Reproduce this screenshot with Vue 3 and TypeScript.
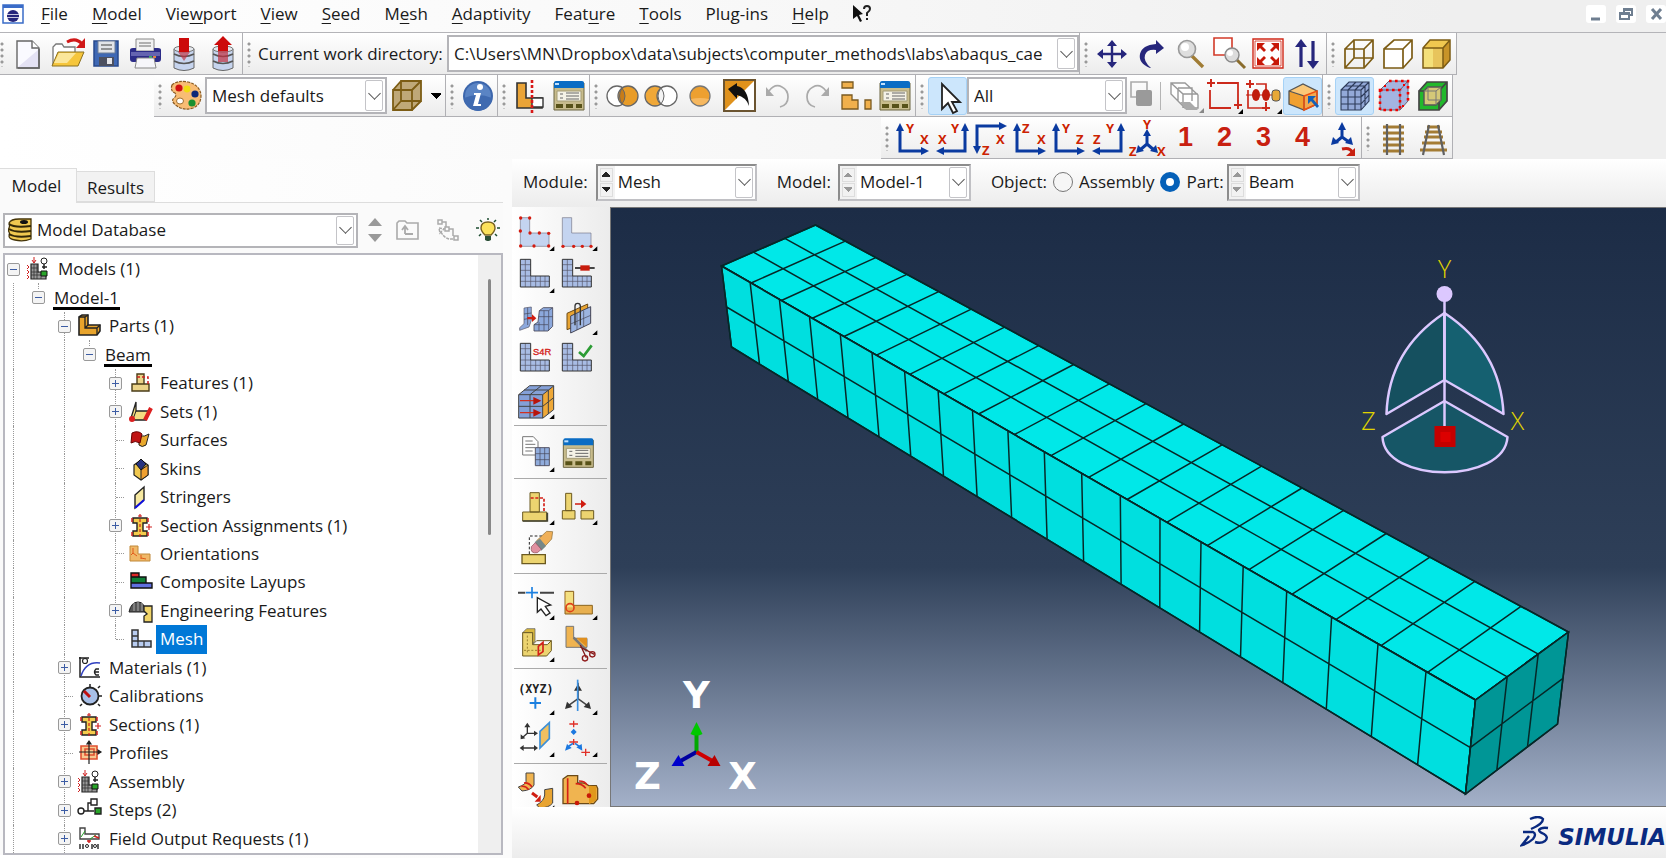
<script setup lang="ts">
import { computed, ref } from 'vue'

type Point = [number, number]

interface TreeNode {
  label: string
  level: number
  icon?: string
  toggle?: '+' | '-'
  underline?: boolean
  selected?: boolean
}

interface MenuItem {
  before: string
  key: string
  after: string
}

const menu: MenuItem[] = [
  { before: '', key: 'F', after: 'ile' },
  { before: '', key: 'M', after: 'odel' },
  { before: 'Vie', key: 'w', after: 'port' },
  { before: '', key: 'V', after: 'iew' },
  { before: '', key: 'S', after: 'eed' },
  { before: 'M', key: 'e', after: 'sh' },
  { before: '', key: 'A', after: 'daptivity' },
  { before: 'Feat', key: 'u', after: 're' },
  { before: '', key: 'T', after: 'ools' },
  { before: 'Plu', key: 'g', after: '-ins' },
  { before: '', key: 'H', after: 'elp' },
]

const axis = (x: number, y: number, t: string) =>
  `<text x="${x}" y="${y}" font-family="Open Sans, sans-serif" font-weight="700" font-size="13" fill="#cc2200">${t}</text>`
const arrows = (d: string, heads: string) =>
  `<path d="${d}" fill="none" stroke="#0a3aa0" stroke-width="3"/><path d="${heads}" fill="#0a3aa0"/>`

const tableIcon = `<path d="M3 5h30v27H3z" fill="#c8bc8c" stroke="#6b6440"/><path d="M3 5q0-2 2-2h26q2 0 2 2v5H3z" fill="#0a6cc4"/><path d="M4 6h4" stroke="#bfe0ff" stroke-width="2"/><path d="M6 13h24v10H6z" fill="#f4f2e6" stroke="#a49c74"/><path d="M9 16h3M9 20h3M15 15h13M15 18h13M15 21h13" stroke="#666"/><path d="M5 26h7v4H5zM15 26h7v4h-7zM25 26h6v4h-6z" fill="#585218"/>`
const cylinder = `<path d="M8 13v19q10 5 20 0V13" fill="#c6d4ee" stroke="#666"/><path d="M8 18q10 5 20 0M8 25q10 5 20 0" fill="none" stroke="#555" stroke-width="1.5"/><ellipse cx="18" cy="13" rx="10" ry="3" fill="#e4e8ee" stroke="#777"/>`

/* Horizontal toolbars: 36 x 36 drawing area */
const bar: Record<string, string> = {
  fresh: `<path d="M7 5h15l7 7v20H7z" fill="#fafaff" stroke="#666" stroke-width="1.4"/><path d="M8 31L28 14v17z" fill="#e4e2f4"/><path d="M22 5v7h7" fill="#fff" stroke="#666" stroke-width="1.4"/><path d="M29 13v19H8" fill="none" stroke="#666" stroke-width="1.6"/>`,
  open: `<path d="M4 29V11l3-3h6l2 3h11v7" fill="#fff" stroke="#777" stroke-width="1.3"/><path d="M9 16h26l-6 14H3z" fill="#f6c63c" stroke="#8a7020"/><path d="M10 17h17l-9 10H5z" fill="#fbe69a"/><path d="M18 6q9-5 15 2" fill="none" stroke="#d01818" stroke-width="3"/><path d="M36 2v10H27z" fill="#d01818"/>`,
  save: `<path d="M6 5h24v25H6z" fill="#3f68b4" stroke="#27488c" stroke-width="1.5"/><path d="M10 5h17v12H10z" fill="#e2e4e8" stroke="#6f7f98"/><path d="M13 9h11M13 13h11" stroke="#777" stroke-width="1.5"/><path d="M11 21h15v9H11z" fill="#4c5060"/><path d="M19 22h5v6h-5z" fill="#e6e6ea"/>`,
  print: `<path d="M9 3h18v12H9z" fill="#f2f2f2" stroke="#888"/><path d="M12 7h12M12 10h12" stroke="#999" stroke-width="1.5"/><path d="M3 14q0-2 3-2h3v3h18v-3h4q3 0 3 2v9q0 3-3 3H6q-3 0-3-3z" fill="#2c2c88"/><path d="M4 16h29v4H4z" fill="#6464b0"/><path d="M22 20h3v2h-3z" fill="#30b060"/><path d="M26 20h3v2h-3z" fill="#e08040"/><path d="M10 22h17l2 10H8z" fill="#f6f6fa" stroke="#888"/>`,
  load: cylinder + `<path d="M13 2h10v14H13z" fill="#cc0a0a"/><path d="M12 16h12l-6 9z" fill="#c03040" opacity=".65"/>`,
  unload: cylinder + `<path d="M13 14h10v12H13z" fill="#c03040" opacity=".7"/><path d="M18 0l9 9h-4v6H13V9H9z" fill="#cc0a0a"/>`,
  pan: `<path d="M18 8v21M8 18h21" stroke="#26267c" stroke-width="2.4"/><path d="M18 4l5 6H13zM18 32l5-6H13zM3 18l6-5v10zM33 18l-6-5v10z" fill="#26267c"/>`,
  turn: `<path d="M17 32Q5 27 7 18T23 8V4l8 8-8 6v-4q-9-1-11 5t6 13z" fill="#26267c"/>`,
  loupe: `<path d="M19 19l12 12" stroke="#a07c34" stroke-width="3.4"/><circle cx="15" cy="13" r="8.500" fill="#dedede" stroke="#999" stroke-width="1.6"/><circle cx="13" cy="11" r="4" fill="#fff"/>`,
  boxzoom: `<path d="M3 2h18v17H3z" fill="#fff" stroke="#d23a28" stroke-width="1.6"/><path d="M25 23l9 9" stroke="#8a6c2c" stroke-width="3"/><circle cx="21" cy="19" r="7" fill="#dcdcdc" stroke="#888" stroke-width="1.4"/><circle cx="19" cy="17" r="3" fill="#fff"/>`,
  fit: `<path d="M3 3h30v29H3z" fill="#fff" stroke="#d02818" stroke-width="1.4"/><path d="M5 5h26v25H5z" fill="none" stroke="#d02818" stroke-width=".8"/><path d="M7 7h8l-3 3 4 4-2 2-4-4-3 3zM29 7h-8l3 3-4 4 2 2 4-4 3 3zM7 29h8l-3-3 4-4-2-2-4 4-3-3zM29 29h-8l3-3-4-4 2-2 4 4 3-3z" fill="#c81808"/>`,
  cycle: `<path d="M12 31V9M24 5v22" stroke="#26267c" stroke-width="3.2"/><path d="M12 3l6 8H6zM24 33l6-8H18z" fill="#26267c"/>`,
  wire: `<path d="M4 13h19v19H4zM13 4h19v18H13zM4 13l9-9M23 13l9-9M4 32l9-10M23 32l9-10" fill="none" stroke="#7c5c14" stroke-width="1.7"/>`,
  hidden: `<path d="M4 13h19v19H4zM4 13l10-9h18v18l-9 10M23 13l9-9" fill="#fff" stroke="#7c5c14" stroke-width="1.7"/>`,
  shaded: `<path d="M4 12l7-8h20l-7 8z" fill="#f0c850"/><path d="M4 12h20v20H4z" fill="#f4e07a"/><path d="M14 12h10v20H14z" fill="#e8c45c"/><path d="M24 12l7-8v20l-7 8z" fill="#c89428"/><path d="M4 12l7-8h20v20l-7 8H4zM4 12h20v20M24 12l7-8" fill="none" stroke="#7c5c14" stroke-width="1.5"/>`,
  palette: `<path d="M4 7q5-5 16-3 12 3 13 13 0 10-8 13-9 3-16-2-7-5-3-8 3-2 1-5-5-2-3-8z" fill="#f8bc74" stroke="#8a5a20" stroke-width="1.2" stroke-dasharray="3 1"/><circle cx="11" cy="10" r="3.600" fill="#d01010"/><circle cx="19" cy="11" r="3.400" fill="#f0dc10"/><circle cx="27" cy="16" r="3.600" fill="#102878"/><circle cx="24" cy="25" r="3.600" fill="#189030"/><ellipse cx="12" cy="23" rx="3.500" ry="3" fill="#fff" stroke="#a07030"/>`,
  cube: `<path d="M4 12l8-9h20v20l-9 9H4z" fill="#bfa878"/><path d="M4 12h19v20H4zM12 3h20v20H12zM4 12l8-9M23 12l9-9M4 32l8-9M23 32l9-9" fill="none" stroke="#7c5c14" stroke-width="1.8"/>`,
  info: `<circle cx="18" cy="18" r="15" fill="#3c66ac"/><circle cx="18" cy="18" r="13" fill="#5a84c4"/><path d="M4 20q14-6 28 0-2 12-14 13Q6 32 4 20z" fill="#3f6ab0"/><circle cx="20" cy="9" r="3" fill="#fff"/><path d="M14 15h7l-3 11h3v2h-8l3-11h-2z" fill="#fff"/>`,
  section: `<path d="M5 5h9v15h16v10H5z" fill="#eaa437" stroke="#333" stroke-width="1.6"/><path d="M20 20h11v9H20z" fill="#fff" stroke="#333" stroke-width="1.4"/><path d="M20 2v34" stroke="#d81818" stroke-width="2.600" stroke-dasharray="3 2"/>`,
  table: tableIcon,
  venn1: `<circle cx="13" cy="18" r="10" fill="#fff" stroke="#666" stroke-width="1.3"/><circle cx="24" cy="18" r="10" fill="#e89c28" stroke="#666" stroke-width="1.3"/><path d="M18 10q6 8 0 16-5-8 0-16z" fill="#c87c18" stroke="#666"/>`,
  venn2: `<circle cx="12" cy="18" r="10" fill="#f0a838" stroke="#666" stroke-width="1.3"/><circle cx="24" cy="18" r="10" fill="#fff" stroke="#666" stroke-width="1.3"/><path d="M18 10q6 8 0 16-6-8 0-16z" fill="#f4f4f4" stroke="#666"/>`,
  disc: `<circle cx="18" cy="18" r="10" fill="#eda030" stroke="#777" stroke-width="1.3"/><path d="M9 21q9-2 18 0-3 6-9 6t-9-6z" fill="#f6b860"/>`,
  swap: `<path d="M3 2h31v31H3z" fill="#fff"/><path d="M3 2h31L3 33z" fill="#e0921c"/><path d="M3 2h31v31H3z" fill="none" stroke="#6b5430" stroke-width="2"/><path d="M7 11l9-6v3q11 2 12 20-3-9-12-11v4z" fill="#111"/>`,
  undo: `<path d="M9 13q6-8 13-4 6 3 6 10 0 8-8 10" fill="none" stroke="#aaa" stroke-width="1.7"/><path d="M6 9v9h8z" fill="#aaa"/>`,
  redo: `<path d="M27 13q-6-8-13-4-6 3-6 10 0 8 8 10" fill="none" stroke="#aaa" stroke-width="1.7"/><path d="M30 9v9h-8z" fill="#aaa"/>`,
  tiles: `<path d="M4 4h11v6H4zM4 17h10v5h6v9H4zM27 22h6v9h-6z" fill="#f0b04c" stroke="#7a5a20" stroke-width="1.3"/>`,
  pointer: `<path d="M12 6v25l6-6 5 10 4-2-5-9h8z" fill="#fff" stroke="#222" stroke-width="1.8"/>`,
  stack: `<path d="M3 4h16v15H3z" fill="none" stroke="#aaa" stroke-width="1.600"/><path d="M8 14q0-2 2-2h12q2 0 2 2v12q0 2-2 2H10q-2 0-2-2z" fill="#9a9a9a"/>`,
  ghost: `<path d="M3 5h14l13 12v13H17L3 16zM3 5l12 11h15M15 16v14M10 10v13M10 10h14v13" fill="#fff" stroke="#999" stroke-width="1.4"/><path d="M12 24l6 8h12l-8-8z" fill="#aaa"/><path d="M36 30v5h-5z" fill="#888"/>`,
  rubber: `<path d="M10 5h21v22M3 12v18h21" fill="none" stroke="#cc2a1c" stroke-width="1.8"/><path d="M4 1v8M0 5h8M31 22v9M27 27h8" stroke="#cc2a1c" stroke-width="2"/><path d="M36 31v5h-5z" fill="#000"/>`,
  picks: `<path d="M10 6h10v8M2 12v18h14M20 24v4" fill="none" stroke="#cc2a1c" stroke-width="1.7"/><path d="M4 2v8M0 6h8M20 24v9M16 30h8" stroke="#cc2a1c" stroke-width="2"/><ellipse cx="10" cy="17" rx="4" ry="6" fill="#c01c0c"/><ellipse cx="20" cy="17" rx="4" ry="6" fill="#c01c0c"/><path d="M0 17h26" stroke="#c01c0c"/><rect x="26" y="12" width="8" height="11" rx="3" fill="#e8a838" stroke="#555"/><path d="M36 31v5h-5z" fill="#000"/>`,
  pickbox: `<path d="M4 13L18 6l14 7-13 5z" fill="#fbc878"/><path d="M4 13l15 5v14L4 26z" fill="#f0a030"/><path d="M19 18l13-5v13l-13 6z" fill="#f2a850"/><path d="M4 13L18 6l14 7v13l-13 6-15-6zM4 13l15 5v14" fill="none" stroke="#555" stroke-width="1.300"/><path d="M19 18l13-5v13l-13 6z" fill="none" stroke="#f05010" stroke-width="1.500"/><path d="M23 18h8l-3 3 6 7-2 2-6-7-3 3z" fill="#1460b8"/>`,
  meshcube: `<path d="M4 12l8-8h20v19l-8 9H4z" fill="#93a9d8"/><path d="M4 12h20v20H4zM4 12l8-8h20v19l-8 9M24 12l8-8M11 12v20M18 12v20M4 19h20M4 26h20M11 12l8-8M18 12l8-8M8 8h20v20M24 19l8-8M24 26l8-9" fill="none" stroke="#2c3a58" stroke-width="1.1"/>`,
  seedcube: `<path d="M4 12l9-9h19v20l-8 9H4z" fill="#a4b4e0"/><path d="M4 12h20v20H4zM4 12l9-9h19v20l-8 9M24 12l8-9" fill="none" stroke="#667" stroke-width="1"/><path d="M4 12h20v20H4zM13 3h19v20" fill="none" stroke="#f00000" stroke-width="2.6" stroke-dasharray="2.6 3.400"/><path d="M8 7h2v2H8zM28 27h-2v2h2zM27 6h2v2h-2z" fill="#f00000"/>`,
  geocube: `<path d="M4 13l8-9h20v19l-8 9H4z" fill="#22b82c"/><path d="M4 13h20v19H4zM4 13l8-9h20v19l-8 9M24 13l8-9" fill="none" stroke="#444" stroke-width="1.7"/><path d="M9 13l4-4h13v13l-5 5H9z" fill="#d4c878" stroke="#555" stroke-width="1.4"/><path d="M9 13h12v14M21 13l5-4M13 9v13h13" fill="none" stroke="#777"/>`,
  xy: arrows('M5 8v23h24', 'M5 3l4 8H1zM34 31l-8-4v8z') + axis(11, 13, 'Y') + axis(25, 24, 'X'),
  yx: arrows('M31 8v23H7', 'M31 3l4 8h-8zM2 31l8-4v8z') + axis(17, 13, 'Y') + axis(4, 24, 'X'),
  zx: arrows('M4 29V6h23', 'M4 34l-4-8h8zM34 6l-8-4v8z') + axis(23, 24, 'X') + axis(9, 35, 'Z'),
  xz: arrows('M5 8v23h24', 'M5 3l4 8H1zM34 31l-8-4v8z') + axis(10, 13, 'Z') + axis(25, 24, 'X'),
  yz: arrows('M5 8v23h24', 'M5 3l4 8H1zM34 31l-8-4v8z') + axis(11, 13, 'Y') + axis(25, 24, 'Z'),
  zy: arrows('M31 8v23H7', 'M31 3l4 8h-8zM2 31l8-4v8z') + axis(16, 13, 'Y') + axis(3, 24, 'Z'),
  iso: arrows('M18 14v10l-7 6M18 24l7 6', 'M18 9l4 7h-8zM7 33l2-8 6 6zM29 33l-2-8-6 6z') + axis(14, 9, 'Y') + axis(0, 36, 'Z') + axis(28, 36, 'X'),
  spin: arrows('M18 8v9l-6 5M18 17l7 5', 'M18 2l4 8h-8zM7 25l2-8 6 6zM29 25l-2-8-6 6z') + `<path d="M18 29q8-2 10 3" fill="none" stroke="#c82010" stroke-width="3"/><path d="M31 28v8h-9z" fill="#c82010"/>`,
  rail1: `<path d="M7 7h21M7 13h21M7 19h21M7 25h21M7 31h21" stroke="#a47c34" stroke-width="3"/><path d="M11 4v31M24 4v31" stroke="#606060" stroke-width="2.200"/>`,
  rail2: `<path d="M12 7h13M10 12h17M9 17h19M7 23h23M5 30h27" stroke="#a47c34" stroke-width="3"/><path d="M14 5L8 35M23 5l6 30" stroke="#606060" stroke-width="2.200"/>`,
}

const corner = '<path d="M106 123h15v-14z" fill="#000"/>'
const seedDots = (pts: Point[]) => pts.map(([x, y]) => `<circle cx="${x}" cy="${y}" r="5" fill="#d41c10"/>`).join('')
const plainL = (x: number) => `<path d="M${x} 23h28v46h58v40H${x}z" fill="#c4d4f0" stroke="#778" stroke-width="2"/>`
const meshL = (x: number) =>
  `<path d="M${x} 22h31v50h56v33H${x}z" fill="#a8bce4"/><path d="M${x + 15} 22v83M${x + 31} 72v33M${x + 46} 72v33M${x + 60} 72v33M${x + 74} 72v33M${x} 38h31M${x} 55h31M${x} 72h31M${x} 88h87" stroke="#556" stroke-width="2"/><path d="M${x} 22h31v50h56v33H${x}z" fill="none" stroke="#333" stroke-width="3"/>`

/* Module toolbox: 126 x 126 drawing area */
const box: Record<string, string> = {
  seedPart: plainL(19) + seedDots([[20, 24], [47, 24], [19, 63], [48, 69], [76, 69], [104, 70], [20, 108], [60, 108], [104, 108]]) + corner,
  seedEdge: plainL(16) + seedDots([[18, 109], [50, 109], [76, 109], [102, 109]]) + corner,
  meshPart: meshL(19) + corner,
  controls: meshL(16) + '<path d="M54 48h59" stroke="#222" stroke-width="5"/><path d="M70 40h28v16H70z" fill="#c81c0c"/>',
  elements: `<path d="M30 42l22-3v40l-7 20-28 10v-8l13-12z" fill="#8ca8dc" stroke="#556" stroke-width="2"/><path d="M41 41v52M30 60l22-3M30 76l22-4" stroke="#445" stroke-width="2"/><path d="M40 69h14v-8l13 12-13 11v-8H40z" fill="#d01c10"/><path d="M76 50l12-9h28v56l-14 14H60V92l12-8z" fill="#8ca8dc" stroke="#445" stroke-width="2.500"/><path d="M76 50h28v60M90 50v60M60 92h42M74 68h42M104 50l12-9M75 84v26" fill="none" stroke="#445" stroke-width="2"/>`,
  hook: `<path d="M30 58l62-28v54L30 107z" fill="#e8a432" stroke="#6b4a18" stroke-width="3"/><path d="M41 66l60-28v50L41 117z" fill="#9cb4e0" stroke="#445" stroke-width="3"/><path d="M41 90l60-26M60 58v50M80 50v49" stroke="#445" stroke-width="2"/><path d="M54 94V36q0-8 8-8t8 8v58" fill="none" stroke="#333" stroke-width="4"/>` + corner,
  s4r: meshL(19) + '<text x="57" y="56" font-family="Liberation Sans, sans-serif" font-size="28" fill="#d42018" stroke="#d42018">S4R</text>',
  verify: meshL(16) + '<path d="M66 48l14 12 24-32" fill="none" stroke="#2c9c34" stroke-width="8"/>',
  stackMesh: `<path d="M14 50l33-27h72v72l-33 26H14z" fill="#84a0d8"/><path d="M86 50l33-26v70l-33 26z" fill="#eea838"/><path d="M14 50h72v70H14zM14 50l33-27h72v72l-33 26M86 50l33-26M48 50v70M48 50l34-27M14 85h72l33-26M30 36h73v72" fill="none" stroke="#444" stroke-width="3"/><path d="M18 68h44M18 104h44" stroke="#d03020" stroke-width="4"/><path d="M58 57l24 11-24 12zM58 93l24 11-24 12z" fill="#b8140c"/>` + corner,
  copyMesh: `<path d="M26 17h32l14 15v40H26z" fill="#fff" stroke="#777" stroke-width="3"/><path d="M34 30h22M34 40h30M34 50h30M34 60h22" stroke="#777" stroke-width="3"/><path d="M64 50h42v54H64z" fill="#90acdc" stroke="#556" stroke-width="3"/><path d="M78 50v54M92 50v54M64 68h42M64 86h42" stroke="#445" stroke-width="2"/>` + corner,
  table: `<g transform="translate(10 13) scale(3)">${tableIcon}</g>`,
  datum1: `<path d="M26 84h72v27H26zM48 26h28v58H48z" fill="#ecd470" stroke="#6b5a20" stroke-width="3"/><path d="M26 111h74V86" fill="none" stroke="#443" stroke-width="5"/><path d="M50 42h40v42" fill="none" stroke="#d42018" stroke-width="5" stroke-dasharray="9 5"/>` + corner,
  datum2: `<path d="M16 80h38v25H16zM26 28h18v52H26zM72 80h38v25H72z" fill="#ecd470" stroke="#6b5a20" stroke-width="3"/><path d="M54 58h18v-11l16 13-16 13V62H54z" fill="#d01c10"/>` + corner,
  erase: `<path d="M24 86h70v27H24z" fill="#ecd470" stroke="#6b5a20" stroke-width="4"/><path d="M46 84V30h44" fill="none" stroke="#222" stroke-width="3" stroke-dasharray="8 6"/><path d="M68 44l30-28 18 1-3 22-24 26z" fill="#f0b058" stroke="#8a6a30" stroke-width="2"/><path d="M62 48l16-10 18 22-14 14z" fill="#788"/><path d="M52 62l12-12 18 20-12 10q-22 4-18-18z" fill="#e090a0" stroke="#845" stroke-width="2"/>`,
  pick: `<path d="M12 41h22M78 41h42" stroke="#444" stroke-width="6"/><path d="M36 41h36M54 24v34" stroke="#1c80e0" stroke-width="5"/><path d="M70 56v44l11-10 15 20 12-8-14-20 16-4z" fill="#fff" stroke="#222" stroke-width="4"/>` + corner,
  edge: `<path d="M24 37h26v42h56v26H24z" fill="#e8b050" stroke="#8a6420" stroke-width="3"/><path d="M26 39h22v46H26z" fill="#f4e080"/><circle cx="39" cy="86" r="12" fill="none" stroke="#e04018" stroke-width="5"/>` + corner,
  cell: `<path d="M26 35l12-12h25v36l-8 10V35z" fill="#d8b840" stroke="#555" stroke-width="2"/><path d="M26 35h30v36h44l12-12v30l-14 16H26z" fill="#ecd470" stroke="#6b5a20" stroke-width="3"/><path d="M56 71l12-12h44" fill="none" stroke="#6b5a20" stroke-width="3"/><path d="M40 44v52M30 88h50" stroke="#998030" stroke-width="3" stroke-dasharray="6 5"/><path d="M73 76l14-12v28l-14 10z" fill="none" stroke="#d42018" stroke-width="5"/>` + corner,
  cut: `<path d="M27 16h23v36h40v27H27z" fill="#f0b450" stroke="#777" stroke-width="3"/><path d="M58 50h32v28z" fill="#e09020"/><path d="M50 50l40 40" stroke="#777" stroke-width="8"/><path d="M70 72l18 38M70 78l42 22" stroke="#801818" stroke-width="4"/><circle cx="84" cy="112" r="8" fill="none" stroke="#901c1c" stroke-width="4"/><circle cx="106" cy="100" r="8" fill="none" stroke="#901c1c" stroke-width="4"/>`,
  xyz: `<text x="13" y="58" font-family="DejaVu Sans Mono, monospace" font-weight="700" font-size="35" fill="#222">(XYZ)</text><path d="M64 70v34M47 87h34" stroke="#1c80e0" stroke-width="6"/>` + corner,
  csys: `<path d="M63 26v48M30 98l33-24 33 24" fill="none" stroke="#444" stroke-width="5"/><path d="M63 30l12 20H51zM24 105l6-22 16 16zM102 105l-6-22-16 16z" fill="#333"/><path d="M62 17v94" stroke="#3c90e0" stroke-width="5"/>` + corner,
  plane: `<path d="M40 28v24h26M40 52L24 66M22 96h44" fill="none" stroke="#333" stroke-width="4"/><path d="M40 20l9 14H31zM72 52l-12-8v16zM20 70v-15l14 12zM17 96l12-9v18zM72 96l-12-9v18z" fill="#333"/><path d="M78 46l28-26v48L78 96z" fill="#f0c060" stroke="#3c90d8" stroke-width="5"/>` + corner,
  points: `<path d="M50 14v20M37 24h26M50 69v18M37 78h26M86 98v22M73 109h26" stroke="#e03028" stroke-width="4"/><path d="M50 38l9 10-9 9-9-9zM24 104l6-20 14 12zM76 104l-2-20-16 10z" fill="#1c78e0"/><path d="M36 90l12-8M54 82l14 10" stroke="#1c78e0" stroke-width="5"/>` + corner,
  bend: `<path d="M36 12h24v36q-8 16-36 18l-11-12q22-8 23-16z" fill="#f0b450" stroke="#444" stroke-width="3"/><path d="M30 42q14-2 24 12M22 52q14-2 22 10" stroke="#d42018" stroke-width="5" fill="none"/><path d="M54 72l16 12" stroke="#d01c10" stroke-width="9"/><path d="M80 78v20H62z" fill="#d01c10"/><path d="M92 62l24-4v44q-12 16-40 14l-8-8q22-12 24-30z" fill="#e8a432" stroke="#444" stroke-width="3"/>` + corner,
  block: `<path d="M18 30l14-10h30v22h10q12-2 24 8h22l4 8v32l-12 14H18z" fill="#f0b450" stroke="#6b4a18" stroke-width="4"/><path d="M96 50v56l22-12V52z" fill="#e0981c"/><path d="M32 28v76M56 44q20 0 30 14M66 36q18 0 24 12" stroke="#d42018" stroke-width="5" fill="none"/><circle cx="60" cy="102" r="7" fill="#c81808"/><circle cx="96" cy="80" r="7" fill="#c81808"/>`,
}

const beamSection = `<path d="M4 4h14v5h-4v8h4v5H4v-5h4V9H4z" fill="#f4cc4c" stroke="#222" stroke-width="1.400"/><path d="M11 0v23" stroke="#d02020" stroke-width="1.200" stroke-dasharray="3 2"/><path d="M17 13h6M20 10v6M9 2h4" stroke="#d02020" stroke-width="1.200"/><path d="M3 4v4M3 18v4M19 4v4M19 18v4" stroke="#d02020" stroke-width="1.500"/>`
const assemblyIcon = `<path d="M4 7h7v8h8v7H4z" fill="#999" stroke="#222" stroke-width="1.200"/><path d="M7 7v15M10 7v15M14 15v7M4 11h7M4 15h8M4 18h14" stroke="#333" stroke-width=".8"/><path d="M7 0v6M5 3l2 3 2-3M0 8l2 2-2 2M0 13l2 2-2 2M0 18l2 2-2 2" stroke="#d02020" fill="none"/><circle cx="17" cy="4" r="3" fill="#fff" stroke="#222"/><path d="M17 7v5M15 10h5" stroke="#222" stroke-width="1.500"/><path d="M14 14h6v5h-6z" fill="#28a428" stroke="#111"/>`

/* Model tree: 24 x 24 drawing area */
const small: Record<string, string> = {
  models: assemblyIcon,
  part: '<path d="M1 3l3-2h6v10h12v6l-3 4H1z" fill="#e8a42c" stroke="#222" stroke-width="1.600"/><path d="M1 3h6l3-2M7 3v11h12v7M7 14l3-3M19 14l3-3" fill="none" stroke="#222" stroke-width="1.300"/>',
  features: '<path d="M3 13h17v7H3zM8 3h7v10H8z" fill="#ecd488" stroke="#4a3c18" stroke-width="1.400"/><path d="M8 6h11v8" fill="none" stroke="#d02020" stroke-width="1.500" stroke-dasharray="3 2"/>',
  sets: '<path d="M2 18L7 2v9h14l-4 9H3z" fill="#f4dc80" stroke="#222" stroke-width="1.300"/><path d="M7 11L4 19" stroke="#222"/><path d="M16 20l6-12" stroke="#dc2020" stroke-width="4"/><circle cx="3" cy="19" r="3" fill="#dc2020"/>',
  surfaces: '<path d="M10 8q6 1 10-2l-3 11q-4 3-7 0z" fill="#e8a82c" stroke="#222"/><path d="M3 5q6-3 10 1l-2 9q-5-3-9 0z" fill="#c01414" stroke="#600"/>',
  skins: '<path d="M5 8l7-5 7 5v10l-7 5-7-5z" fill="#f0c850" stroke="#222" stroke-width="1.200"/><path d="M12 13l7-5v10l-7 5z" fill="#f0a030" stroke="#222"/><path d="M12 2l5 5-5 6-5-6z" fill="#283480" stroke="#111"/>',
  stringers: '<path d="M6 10l9-8v13l-9 8z" fill="#f6e8a0" stroke="#222" stroke-width="1.400"/><path d="M6 23l9-8" stroke="#1010e0" stroke-width="2"/>',
  section: beamSection,
  orient: '<path d="M1 4h8v8h12v7H1z" fill="#f0b868" stroke="#c08838"/><path d="M4 6v5l-2 2M4 11l4 3M12 13v4M12 16l5 1" stroke="#e05818" fill="none"/>',
  layups: '<path d="M2 3h8v4H2z" fill="#e02828"/><path d="M2 7h15v6H2z" fill="#108038"/><path d="M2 13h21v5H2z" fill="#6070e0"/><path d="M2 3h8v4h7v6h6v5H2zM2 7h8M2 13h15" fill="none" stroke="#111" stroke-width="1.400"/>',
  engineering: '<path d="M0 13q2-10 9-10t7 10z" fill="#555" stroke="#222"/><path d="M5 4v8M9 2v10M13 4v8" stroke="#aaa"/><path d="M15 7h8v16h-8v-6l3-2-3-3z" fill="#f0d468" stroke="#222" stroke-width="1.300"/>',
  mesh: '<path d="M3 3h6v11h13v6H3z" fill="#b8ccf0" stroke="#333" stroke-width="1.500"/><path d="M3 9h6M3 14h6v6M15 14v6" stroke="#333" stroke-width="1.300" fill="none"/>',
  materials: '<path d="M2 1v20h20M1 2h10" fill="none" stroke="#222" stroke-width="1.500"/><path d="M3 20Q8 5 22 7" fill="none" stroke="#3040c0" stroke-width="1.400"/><circle cx="7" cy="5" r="2.500" fill="none" stroke="#222" stroke-width="1.200"/><path d="M21 13h-3q-3 3 0 6h3M16 16h5" fill="none" stroke="#222" stroke-width="1.400"/>',
  calibrations: '<circle cx="12" cy="12" r="8.500" fill="#a8c0e8" stroke="#222" stroke-width="1.800"/><path d="M12 0v4M20 12h4M4 20l-2 2M20 20l2 2M20 4l2-2" stroke="#222" stroke-width="1.500"/><path d="M6 7l6 6" stroke="#c01010" stroke-width="3"/>',
  profiles: '<path d="M3 5h16v13H3zM7 8h9v6H7z" fill="#f8c890" stroke="#e05030" stroke-width="1.600"/><path d="M11 0v23M1 11h22M11 0l-2 3h4zM23 11l-3-2v4z" stroke="#222" stroke-width="1.200"/>',
  steps: '<circle cx="3" cy="13" r="3" fill="#fff" stroke="#222" stroke-width="1.400"/><path d="M6 13h10M10 13V5h4" fill="none" stroke="#222" stroke-width="1.400"/><path d="M13 1h6v6h-6z" fill="#fff" stroke="#222" stroke-width="1.400"/><path d="M17 10h6v6h-6z" fill="#28a428" stroke="#222" stroke-width="1.400"/>',
  output: '<path d="M2 1h5v6h14v5H2z" fill="#fff" stroke="#444" stroke-width="1.400"/><path d="M3 10l4-6M12 12l6-4" stroke="#28a428"/><path d="M16 9l5 2M11 13v3M9 14h4" stroke="#d02020" stroke-width="1.500"/><path d="M2 17v5M5 17v5M14 17v5M20 17v5" stroke="#222" stroke-width="1.400"/><circle cx="9" cy="19" r="1.500" fill="none" stroke="#222"/><circle cx="17" cy="19" r="1.500" fill="none" stroke="#222"/>',
}

const fileTools = ['fresh', 'open', 'save', 'print', 'load', 'unload']
const viewTools = ['pan', 'turn', 'loupe', 'boxzoom', 'fit', 'cycle']
const renderTools = ['wire', 'hidden', 'shaded']
const displayTools = ['venn1', 'venn2', 'disc', 'swap', 'undo', 'redo', 'tiles', 'table']
const selectTools = ['ghost', 'rubber', 'picks', 'pickbox']
const meshTools = ['meshcube', 'seedcube', 'geocube']
const axisTools = ['xy', 'yx', 'zx', 'xz', 'yz', 'zy', 'iso']
const pressed = new Set(['pointer', 'pickbox', 'meshcube'])

const toolbox: string[][] = [
  ['seedPart', 'seedEdge', 'meshPart', 'controls', 'elements', 'hook', 's4r', 'verify', 'stackMesh'],
  ['copyMesh', 'table'],
  ['datum1', 'datum2', 'erase'],
  ['pick', 'edge', 'cell', 'cut'],
  ['xyz', 'csys', 'plane', 'points'],
  ['bend', 'block'],
]

const tree: TreeNode[] = [
  { label: 'Models (1)', level: 0, icon: 'models', toggle: '-' },
  { label: 'Model-1', level: 1, toggle: '-', underline: true },
  { label: 'Parts (1)', level: 2, icon: 'part', toggle: '-' },
  { label: 'Beam', level: 3, toggle: '-', underline: true },
  { label: 'Features (1)', level: 4, icon: 'features', toggle: '+' },
  { label: 'Sets (1)', level: 4, icon: 'sets', toggle: '+' },
  { label: 'Surfaces', level: 4, icon: 'surfaces' },
  { label: 'Skins', level: 4, icon: 'skins' },
  { label: 'Stringers', level: 4, icon: 'stringers' },
  { label: 'Section Assignments (1)', level: 4, icon: 'section', toggle: '+' },
  { label: 'Orientations', level: 4, icon: 'orient' },
  { label: 'Composite Layups', level: 4, icon: 'layups' },
  { label: 'Engineering Features', level: 4, icon: 'engineering', toggle: '+' },
  { label: 'Mesh', level: 4, icon: 'mesh', selected: true },
  { label: 'Materials (1)', level: 2, icon: 'materials', toggle: '+' },
  { label: 'Calibrations', level: 2, icon: 'calibrations' },
  { label: 'Sections (1)', level: 2, icon: 'section', toggle: '+' },
  { label: 'Profiles', level: 2, icon: 'profiles' },
  { label: 'Assembly', level: 2, icon: 'models', toggle: '+' },
  { label: 'Steps (2)', level: 2, icon: 'steps', toggle: '+' },
  { label: 'Field Output Requests (1)', level: 2, icon: 'output', toggle: '+' },
]

const hasGuide = (row: number, level: number): boolean => {
  if (level % 2 === 1) return false
  const node = tree[row]
  if (level < node.level) return true
  return level === node.level && row > 0
}
const isLast = (row: number): boolean => tree[row].level === 4 && tree[row + 1]?.level !== 4

const objectKind = ref<'assembly' | 'part'>('part')

/* Perspective map of the unit square onto a quad. */
const project = (q: [Point, Point, Point, Point]) => {
  const [[x0, y0], [x1, y1], [x2, y2], [x3, y3]] = q
  const dx1 = x1 - x2, dx2 = x3 - x2, sx = x0 - x1 + x2 - x3
  const dy1 = y1 - y2, dy2 = y3 - y2, sy = y0 - y1 + y2 - y3
  const det = dx1 * dy2 - dx2 * dy1
  const g = (sx * dy2 - dx2 * sy) / det
  const h = (dx1 * sy - sx * dy1) / det
  return (u: number, v: number): Point => {
    const w = g * u + h * v + 1
    return [
      ((x1 - x0 + g * x1) * u + (x3 - x0 + h * x3) * v + x0) / w,
      ((y1 - y0 + g * y1) * u + (y3 - y0 + h * y3) * v + y0) / w,
    ]
  }
}

const face = (corners: [Point, Point, Point, Point], nu: number, nv: number, fill: string) => {
  const at = project(corners)
  const seg = (a: Point, b: Point) => `M${a[0].toFixed(1)} ${a[1].toFixed(1)}L${b[0].toFixed(1)} ${b[1].toFixed(1)}`
  let d = ''
  for (let i = 0; i <= nu; i++) d += seg(at(i / nu, 0), at(i / nu, 1))
  for (let j = 0; j <= nv; j++) d += seg(at(0, j / nv), at(1, j / nv))
  return { points: corners.map((p) => p.join(',')).join(' '), d, fill }
}

const faces = computed(() => {
  const a: Point = [110, 58], b: Point = [204, 17], c: Point = [957, 424], d: Point = [864, 492]
  const a2: Point = [120, 139], d2: Point = [854, 586], c2: Point = [946, 516]
  return [
    face([a, d, c, b], 20, 3, '#00e8e8'),
    face([a, d, d2, a2], 20, 2, '#00dfdf'),
    face([d, c, c2, d2], 3, 2, '#009696'),
  ]
})
</script>

<template>
  <div class="app">
    <header class="header">
      <nav class="menu">
        <svg class="app-icon" viewBox="0 0 22 20"><path d="M1 1h20v18H1z" fill="#fff" stroke="#3a6cc8" stroke-width="1.500" /><path d="M1 1h20v3H1z" fill="#3a6cc8" /><circle cx="11" cy="12" r="6" fill="#26267c" /><path d="M3 12h16" stroke="#fff" stroke-width="4" /><path d="M5 12h12" stroke="#26267c" stroke-width="2.500" /></svg>
        <button v-for="m in menu" :key="m.before + m.key + m.after" class="menu-item">{{ m.before }}<u>{{ m.key }}</u>{{ m.after }}</button>
        <button class="menu-item" aria-label="What's this">
          <svg class="help-icon" viewBox="0 0 18 20"><path d="M0 1v14l4-3 3 6 2-1-3-6 4-1z" fill="#111" /><path d="M11 5q0-3 3-3t3 3q0 2-3 4v3" fill="none" stroke="#222" stroke-width="2" /><path d="M13 14h2v2h-2z" fill="#222" /></svg>
        </button>
        <div class="window-buttons">
          <button aria-label="Minimise"><svg viewBox="0 0 20 18"><path d="M5 14h9" stroke="#6e7e90" stroke-width="3" /></svg></button>
          <button aria-label="Restore"><svg viewBox="0 0 20 18"><path d="M8 7V4h8v6h-3M8 5h8M4 8h9v6H4zM4 9h9" fill="none" stroke="#6e7e90" stroke-width="2" /></svg></button>
          <button aria-label="Close"><svg viewBox="0 0 20 18"><path d="M6 4l9 10M15 4L6 14" stroke="#6e7e90" stroke-width="3" /></svg></button>
        </div>
      </nav>

      <div class="row">
        <div class="bar first">
          <i class="grip"></i>
          <button v-for="t in fileTools" :key="t" class="tool" :aria-label="t"><svg viewBox="0 0 36 36" v-html="bar[t]"></svg></button>
        </div>
        <div class="bar">
          <i class="grip"></i>
          <label class="dir-label" for="dir">Current work directory:</label>
          <span class="combo dir"><select id="dir"><option>C:\Users\MN\Dropbox\data\subjects\computer_methods\labs\abaqus_cae</option></select></span>
        </div>
        <div class="bar">
          <i class="grip"></i>
          <button v-for="t in viewTools" :key="t" class="tool" :aria-label="t"><svg viewBox="0 0 36 36" v-html="bar[t]"></svg></button>
        </div>
        <div class="bar">
          <i class="grip"></i>
          <button v-for="t in renderTools" :key="t" class="tool" :aria-label="t"><svg viewBox="0 0 36 36" v-html="bar[t]"></svg></button>
        </div>
      </div>

      <div class="row second">
        <div class="bar">
          <i class="grip"></i>
          <button class="tool" aria-label="Colour"><svg viewBox="0 0 36 36" v-html="bar.palette"></svg></button>
          <span class="combo colour"><select aria-label="Colour coding"><option>Mesh defaults</option></select></span>
          <button class="tool" aria-label="Translucency"><svg viewBox="0 0 36 36" v-html="bar.cube"></svg></button>
          <button class="caret" aria-label="Translucency options"></button>
        </div>
        <div class="bar">
          <i class="grip"></i>
          <button class="tool" aria-label="Query"><svg viewBox="0 0 36 36" v-html="bar.info"></svg></button>
        </div>
        <div class="bar wide">
          <i class="grip"></i>
          <button class="tool" aria-label="View cut"><svg viewBox="0 0 36 36" v-html="bar.section"></svg></button>
          <button class="tool" aria-label="View cut manager"><svg viewBox="0 0 36 36" v-html="bar.table"></svg></button>
        </div>
        <div class="bar wide">
          <i class="grip"></i>
          <button v-for="t in displayTools" :key="t" class="tool" :aria-label="t"><svg viewBox="0 0 36 36" v-html="bar[t]"></svg></button>
        </div>
        <div class="bar">
          <i class="grip"></i>
          <button class="tool pressed" aria-label="Select"><svg viewBox="0 0 36 36" v-html="bar.pointer"></svg></button>
          <span class="combo filter"><select aria-label="Selection filter"><option>All</option></select></span>
          <button class="tool narrow" aria-label="Overlap"><svg viewBox="0 0 36 36" v-html="bar.stack"></svg></button>
          <i class="divider"></i>
          <button v-for="t in selectTools" :key="t" class="tool" :class="{ pressed: pressed.has(t) }" :aria-label="t"><svg viewBox="0 0 36 36" v-html="bar[t]"></svg></button>
        </div>
        <div class="bar">
          <i class="grip"></i>
          <button v-for="t in meshTools" :key="t" class="tool" :class="{ pressed: pressed.has(t) }" :aria-label="t"><svg viewBox="0 0 36 36" v-html="bar[t]"></svg></button>
        </div>
      </div>

      <div class="row third">
        <div class="bar">
          <i class="grip"></i>
          <button v-for="t in axisTools" :key="t" class="tool" :aria-label="t"><svg viewBox="0 0 36 36" v-html="bar[t]"></svg></button>
          <button v-for="n in 4" :key="n" class="tool number">{{ n }}</button>
          <button class="tool" aria-label="Rotate view"><svg viewBox="0 0 36 36" v-html="bar.spin"></svg></button>
        </div>
        <div class="bar">
          <i class="grip"></i>
          <button class="tool" aria-label="Parallel"><svg viewBox="0 0 36 36" v-html="bar.rail1"></svg></button>
          <button class="tool" aria-label="Perspective"><svg viewBox="0 0 36 36" v-html="bar.rail2"></svg></button>
        </div>
      </div>
    </header>

    <div class="body">
      <aside class="side">
        <div class="tabs">
          <button class="tab active">Model</button>
          <button class="tab">Results</button>
        </div>
        <div class="panel">
          <div class="db-row">
            <span class="combo db">
              <svg class="db-icon" viewBox="0 0 24 24"><path d="M1 5q2-4 10-4 6 0 12 0v20q-8 3-16 1-6-1-6-4 1-2 0-4t0-4q1-2 0-5z" fill="#f0c850" stroke="#443408" stroke-width="1.300" /><path d="M1 6q5 4 22 2M1 11q6 4 22 2M1 16q6 4 22 2" fill="none" stroke="#332808" stroke-width="2" /><ellipse cx="16" cy="4" rx="4" ry="2" fill="#111" /></svg>
              <select aria-label="Tree source"><option>Model Database</option></select>
            </span>
            <span class="steppers"><button class="up" aria-label="Previous"></button><button class="down" aria-label="Next"></button></span>
            <button class="db-tool" aria-label="Set as root"><svg viewBox="0 0 24 24"><path d="M1 21V5l2-2h6l2 2h11v16z" fill="none" stroke="#aaa" stroke-width="1.600" /><path d="M9 16V9M6 12l3-4 3 4M9 16h8" fill="none" stroke="#aaa" stroke-width="1.800" /></svg></button>
            <button class="db-tool" aria-label="Filter"><svg viewBox="0 0 24 24"><path d="M2 2h4v4H2zM9 9h4v4H9zM18 18h4v4h-4zM6 4h4v5M13 11h4v7" fill="none" stroke="#aaa" stroke-width="1.500" /><path d="M3 10l5 1-4 4zM5 14q4 8 12 7" fill="none" stroke="#aaa" stroke-width="1.500" stroke-dasharray="3 1" /></svg></button>
            <button class="db-tool" aria-label="Tips"><svg viewBox="0 0 24 24"><path d="M12 4q7 0 7 6 0 3-4 7H9q-4-4-4-7 0-6 7-6z" fill="#fbe25c" stroke="#776020" stroke-width="1.400" /><path d="M9 18h6v4l-2 1h-2l-2-1z" fill="#2c5038" /><path d="M12 0v2M4 2l2 2M20 2l-2 2M0 10h3M21 10h3M3 18l2-2M21 18l-2-2" stroke="#1c4c30" stroke-width="1.500" /></svg></button>
          </div>
          <div class="tree">
            <ul class="nodes">
              <li v-for="(n, i) in tree" :key="i" class="node">
                <i v-for="l in n.level" :key="l" class="cell" :class="{ guide: hasGuide(i, l - 1), odd: l % 2 === 0 }"></i>
                <i class="cell own" :class="{ guide: hasGuide(i, n.level), last: isLast(i), stub: n.underline }">
                  <button v-if="n.toggle" class="toggle" :class="{ plus: n.toggle === '+' }" :aria-label="n.label"></button>
                  <b v-else class="tick"></b>
                </i>
                <svg v-if="n.icon" class="node-icon" viewBox="0 0 24 24" v-html="small[n.icon]"></svg>
                <span class="label" :class="{ selected: n.selected, underline: n.underline }">{{ n.label }}</span>
              </li>
            </ul>
            <div class="gutter"><div class="thumb"></div></div>
          </div>
        </div>
      </aside>

      <main class="work">
        <div class="context">
          <label for="module">Module:</label>
          <span class="combo sunk module"><span class="spin live"><button aria-label="Previous module"></button><button aria-label="Next module"></button></span><select id="module"><option>Mesh</option></select></span>
          <label for="model">Model:</label>
          <span class="combo sunk model"><span class="spin"><button aria-label="Previous model"></button><button aria-label="Next model"></button></span><select id="model"><option>Model-1</option></select></span>
          <span class="object">Object:</span>
          <label class="radio"><input v-model="objectKind" type="radio" name="object" value="assembly" />Assembly</label>
          <label class="radio"><input v-model="objectKind" type="radio" name="object" value="part" />Part:</label>
          <span class="combo sunk part"><span class="spin"><button aria-label="Previous part"></button><button aria-label="Next part"></button></span><select aria-label="Part"><option>Beam</option></select></span>
        </div>
        <div class="stage">
          <div class="toolbox">
            <div v-for="(g, gi) in toolbox" :key="gi" class="group">
              <button v-for="t in g" :key="t" class="box-tool" :aria-label="t"><svg viewBox="0 0 126 126" v-html="box[t]"></svg></button>
            </div>
          </div>
          <div class="viewport">
            <svg class="scene" viewBox="0 0 1054 598">
              <g v-for="f in faces" :key="f.fill" stroke="#062828" stroke-width="1.500" stroke-linecap="round">
                <polygon :points="f.points" :fill="f.fill" />
                <path :d="f.d" />
              </g>
              <g stroke="#dcc8ff" stroke-width="2.500" stroke-linejoin="round">
                <path d="M833 105Q777 142 775 206L833 172z" fill="#15505f" />
                <path d="M833 105Q889 142 892 206L833 172z" fill="#156070" />
                <path d="M833 193L771 229C773 276 893 276 896 229z" fill="#165666" />
                <path d="M833 86v132" />
              </g>
              <circle cx="833" cy="86" r="8" fill="#dcc8ff" />
              <rect x="823" y="218" width="21" height="21" fill="#c40000" />
              <rect x="829" y="224" width="10" height="10" fill="#dc0000" />
              <g class="compass-text">
                <text x="833" y="70">Y</text><text x="757" y="222">Z</text><text x="906" y="222">X</text>
              </g>
              <path d="M85 544v-18" stroke="#00a800" stroke-width="4" /><path d="M85 514l6 12q-6 3-12 0z" fill="#00c800" />
              <path d="M85 544l-16 9" stroke="#0000a0" stroke-width="4" /><path d="M60 558l7-11 6 11z" fill="#0000cc" />
              <path d="M85 544l16 9" stroke="#d00000" stroke-width="4" /><path d="M109 558l-6-11-7 11z" fill="#b80000" />
              <g class="triad-text">
                <text x="85" y="500">Y</text><text x="36" y="581">Z</text><text x="131" y="581">X</text>
              </g>
            </svg>
          </div>
        </div>
        <footer class="brand">
          <svg class="brand-mark" viewBox="0 0 30 32"><path d="M10 3q9-4 13 0 0 5-12 10M3 16h10q4 2 0 7-4 4-11 6l7-9M28 12q-7-1-9 2 0 2 5 4 5 3 1 7-4 3-10 1" fill="none" stroke="#0a2a80" stroke-width="2.400" /></svg>
          <span class="brand-name">SIMULIA</span>
        </footer>
      </main>
    </div>
  </div>
</template>

<style>
body { margin: 0; background: #fff; }
</style>

<style scoped>
.app {
  display: flex; flex-direction: column; height: 100vh; overflow: hidden;
  font-family: "Open Sans", "Noto Sans", sans-serif; font-size: 17px; line-height: 24px; color: #1a1a1a; background: #fff;
}
.app * { box-sizing: border-box; }
button, select { font: inherit; color: inherit; border: 0; padding: 0; background: none; }
svg { display: block; }
.header { flex: none; background: linear-gradient(to right, #fff, #f8f8f8 45%, #efefef 87%); overflow: hidden; }
.menu { display: flex; align-items: center; height: 33px; padding: 0 0 5px 2px; border-bottom: 1px solid #b4b4b8; }
.app-icon { width: 22px; height: 20px; margin-right: 17px; }
.menu-item { flex: none; margin-right: 24px; height: 26px; }
.menu u { text-underline-offset: 3px; }
.help-icon { width: 18px; height: 20px; }
.window-buttons { display: flex; gap: 10px; margin-left: auto; }
.window-buttons button { width: 20px; height: 18px; background: #fff; border-radius: 3px; }
.window-buttons svg { width: 20px; height: 18px; }

.row { display: flex; height: 42px; }
.second { padding-left: 154px; }
.third { padding-left: 881px; }
.bar { display: flex; flex: none; align-items: center; border-right: 1px solid #b0b0b4; border-bottom: 1px solid #b0b0b4; background: linear-gradient(#fff, #ececec); }
.bar.wide { padding-right: 1px; }
.grip { flex: none; width: 12px; height: 26px; background: radial-gradient(circle at 6px 3px, #999 1px, transparent 2px) 0 0 / 12px 6px; }
.first .grip { width: 8px; background-position: -4px 0; }
.tool { display: grid; place-items: center; flex: none; width: 39px; height: 38px; border: 1px solid transparent; border-radius: 3px; }
.tool svg { width: 36px; height: 36px; overflow: visible; }
.tool.narrow { width: 28px; }
.tool.pressed { background: #cce6fc; border-color: #a6d2f6; }
.number { font: 700 27px "Liberation Sans", sans-serif; color: #c82010; }
.divider { width: 1px; height: 28px; margin: 0 5px; background: #b4b4b4; }
.caret { width: 19px; height: 30px; background: conic-gradient(from -45deg at 50% 100%, #000 90deg, transparent 0) 50% 50% / 10px 6px no-repeat; }
.dir-label { width: 192px; padding-left: 3px; white-space: nowrap; }

.combo { position: relative; display: flex; flex: none; align-items: center; height: 37px; background: #fff; border: 2px solid #b4b4b8; }
.combo select { appearance: none; flex: 1; min-width: 0; height: 100%; padding: 0 24px 0 5px; outline: none; }
.combo::after { content: ""; position: absolute; right: 2px; top: 1px; bottom: 1px; width: 16px; border: 1px solid #c4c4c8; border-radius: 2px; pointer-events: none; }
.combo::before { content: ""; position: absolute; right: 6px; top: 50%; width: 8px; height: 8px; margin-top: -7px; border: solid #555; border-width: 0 1px 1px 0; transform: rotate(45deg); pointer-events: none; }
.dir { width: 632px; }
.colour { width: 182px; }
.filter { width: 160px; }

.body { display: flex; flex: 1; min-height: 0; }
.side { display: flex; flex-direction: column; flex: none; width: 512px; padding: 9px 9px 3px 0; background: linear-gradient(to right, #fff, #fbfbfb); }
.tabs { display: flex; align-items: flex-end; height: 34px; }
.tab { height: 31px; width: 78px; border: 1px solid #ddd; border-left: 0; background: #f2f2f2; padding-top: 2px; }
.tab.active { height: 35px; margin-bottom: -1px; background: #fafafa; border-bottom: 0; width: 77px; padding: 0 3px 0 0; z-index: 1; }
.panel { display: flex; flex-direction: column; flex: 1; min-height: 0; padding-left: 3px; background: #fafafa; border-top: 1px solid #ddd; }
.db-row { display: flex; align-items: center; height: 50px; padding: 4px 4px 0 0; }
.db { width: 355px; height: 35px; }
.db-icon { width: 24px; height: 24px; margin-left: 3px; }
.steppers { display: grid; gap: 8px; margin: 0 14px 0 10px; }
.steppers button { width: 14px; height: 8px; background: #999; }
.up { clip-path: polygon(50% 0, 100% 100%, 0 100%); }
.down { clip-path: polygon(0 0, 100% 0, 50% 100%); }
.db-tool { margin-right: 16px; }
.db-tool svg { width: 24px; height: 24px; }
.db-tool:last-child { margin-right: 0; }
.tree { display: flex; flex: 1; min-height: 0; background: #fff; border: 2px solid #b8b8c0; }
.nodes { display: grid; grid-auto-rows: 1fr; flex: 1; margin: 0; padding: 0 0 0 2px; list-style: none; }
.node { display: flex; align-items: center; min-height: 0; }
.cell { position: relative; flex: none; align-self: stretch; width: 25px; }
.cell.odd { width: 26px; }
.cell.guide::before { content: ""; position: absolute; left: 6px; top: 0; bottom: 0; border-left: 1px dotted #999; }
.cell.own { display: grid; align-items: center; width: 20px; }
.cell.last::before { bottom: 50%; }
.cell.stub::before { content: ""; position: absolute; left: 6px; top: 0; height: 6px; border-left: 1px dotted #999; }
.toggle { position: relative; width: 13px; height: 13px; border: 1px solid #999; border-radius: 2px; background: linear-gradient(#3c5ca4, #3c5ca4) 50% 50% / 7px 1px no-repeat, #f4f4f4; }
.toggle.plus { background: linear-gradient(#3c5ca4, #3c5ca4) 50% 50% / 7px 1px no-repeat, linear-gradient(#3c5ca4, #3c5ca4) 50% 50% / 1px 7px no-repeat, #f4f4f4; }
.tick { width: 8px; margin-left: 7px; border-top: 1px dotted #999; }
.node-icon { flex: none; width: 24px; height: 24px; margin-right: 3px; overflow: visible; }
.label { display: flex; align-items: center; align-self: stretch; padding: 0 4px; white-space: nowrap; }
.label.selected { background: #0078d7; color: #fff; }
.label.underline { align-self: center; height: 25px; margin-left: 1px; padding: 3px 1px 0; border-bottom: 3px solid #000; }
.gutter { width: 23px; padding: 24px 0 0 10px; background: #efefef; }
.thumb { width: 3px; height: 256px; background: #888; border-radius: 2px; }

.work { display: flex; flex-direction: column; flex: 1; min-width: 0; }
.context { display: flex; flex: none; align-items: center; height: 48px; padding: 0 0 2px 11px; background: linear-gradient(#fff, #ececec); white-space: nowrap; }
.sunk { border-color: #8c8c8c #c0c0c4 #c0c0c4 #8c8c8c; }
.module { width: 161px; margin: 0 20px 0 8px; }
.model { width: 133px; margin: 0 20px 0 7px; }
.part { width: 133px; margin-left: 3px; }
.sunk select { padding-left: 3px; }
.spin { display: grid; gap: 1px; width: 17px; padding: 2px; background: #f2f2f2; align-self: stretch; }
.spin button { border: 1px solid #ddd; background: conic-gradient(from 135deg at 50% 0, #999 90deg, transparent 0) 50% 50% / 8px 5px no-repeat; }
.spin button + button { background: conic-gradient(from -45deg at 50% 100%, #999 90deg, transparent 0) 50% 50% / 8px 5px no-repeat; }
.spin.live button { background: conic-gradient(from 135deg at 50% 0, #222 90deg, transparent 0) 50% 50% / 8px 5px no-repeat; }
.spin.live button + button { background: conic-gradient(from -45deg at 50% 100%, #222 90deg, transparent 0) 50% 50% / 8px 5px no-repeat; }
.object { margin-right: 6px; }
.radio { display: flex; align-items: center; gap: 6px; }
.radio + .radio { margin-left: 6px; }
.radio input { appearance: none; width: 20px; height: 20px; margin: 0; border: 1px solid #777; border-radius: 50%; background: #f6f6f6; }
.radio input:checked { border: 6px solid #0560b8; background: #fff; }
.stage { display: flex; flex: 1; min-height: 0; }
.toolbox { flex: none; width: 98px; padding: 3px 0 0; overflow: hidden; background: linear-gradient(to right, #fff, #ececec); }
.group { display: grid; grid-template-columns: 43px 43px; grid-auto-rows: 42px; margin: 0 3px 0 2px; padding: 5px 0; border-top: 1px solid #aaa; }
.group:first-child { border-top: 0; padding-top: 0; }
.box-tool svg { width: 42px; height: 42px; }
.viewport { flex: 1; min-width: 0; border: 1px solid #777; border-right: 0; background: linear-gradient(#1c2c46, #2e3f58 60%, #a3b0c8); }
.scene { width: 100%; height: 100%; }
.compass-text { font: 300 25px "Open Sans", sans-serif; fill: #e0d400; text-anchor: middle; }
.triad-text { font: 700 37px "DejaVu Sans", sans-serif; fill: #fff; text-anchor: middle; }
.brand { display: flex; flex: none; justify-content: flex-end; height: 51px; padding-top: 9px; background: linear-gradient(#fff, #ececec); color: #0a2a80; overflow: hidden; }
.brand-mark { width: 30px; height: 32px; margin-right: 8px; }
.brand-name { font: italic 700 23px/42px "DejaVu Sans", sans-serif; }
</style>
